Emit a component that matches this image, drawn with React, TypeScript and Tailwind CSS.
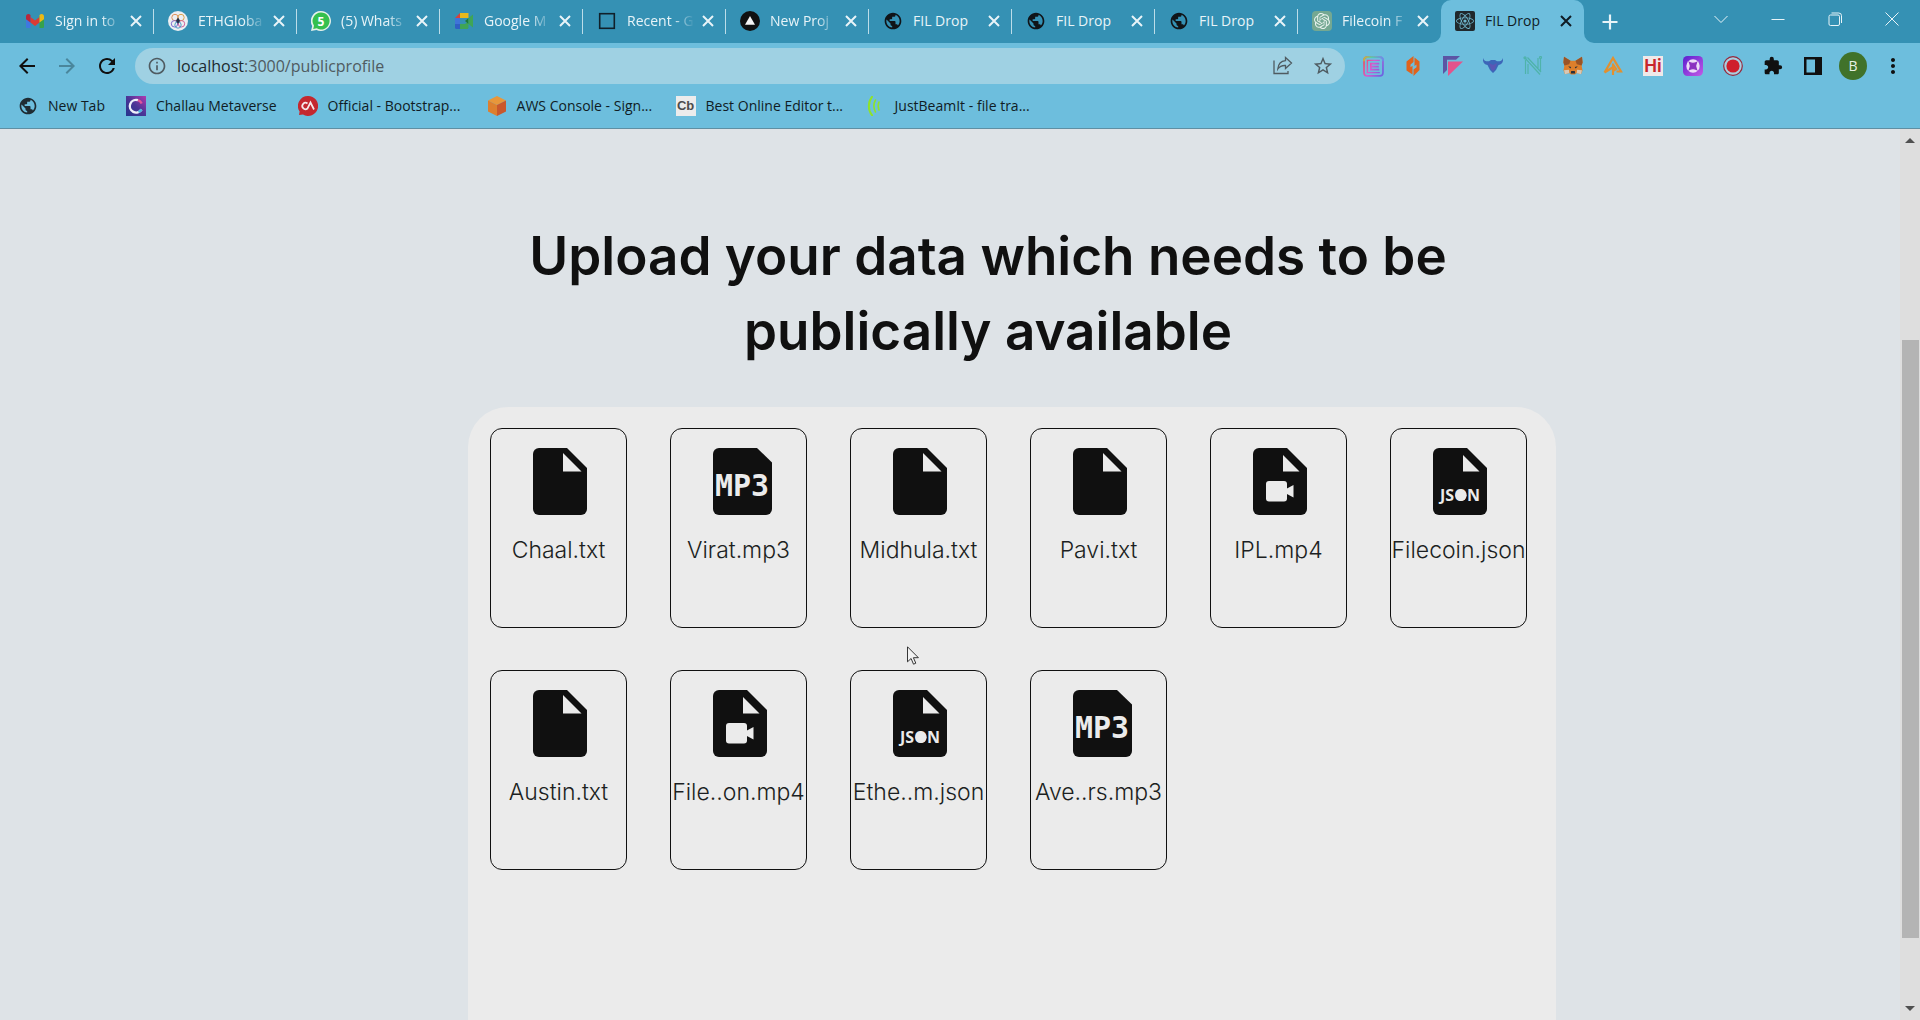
import type { ReactNode } from "react";
import clsx from "clsx";
import { FaReact } from "react-icons/fa";
import { SiOpenai } from "react-icons/si";
import {
  MdArrowBack,
  MdArrowForward,
  MdExtension,
  MdInfoOutline,
  MdMoreVert,
  MdPublic,
  MdRefresh,
  MdStarBorder,
} from "react-icons/md";

type FileKind = "txt" | "mp3" | "mp4" | "json";

const files: { name: string; kind: FileKind }[] = [
  { name: "Chaal.txt", kind: "txt" },
  { name: "Virat.mp3", kind: "mp3" },
  { name: "Midhula.txt", kind: "txt" },
  { name: "Pavi.txt", kind: "txt" },
  { name: "IPL.mp4", kind: "mp4" },
  { name: "Filecoin.json", kind: "json" },
  { name: "Austin.txt", kind: "txt" },
  { name: "File..on.mp4", kind: "mp4" },
  { name: "Ethe..m.json", kind: "json" },
  { name: "Ave..rs.mp3", kind: "mp3" },
];

/* ---------- favicons ---------- */

const Globe = () => <MdPublic className="size-5 shrink-0 text-[#101418]" />;

const Gmail = () => (
  <svg viewBox="0 0 20 20" className="size-5 shrink-0">
    <path d="M1 5h4.500v12H2.500C1.500 17 1 16.500 1 15.500z" fill="#3f78e0" />
    <path d="M19 5h-4.500v12h3c1 0 1.500-.5 1.500-1.500z" fill="#35a24c" />
    <path d="M5.500 6L10 9.500 14.500 6v5.500L10 15l-4.500-3.500z" fill="#dc3b33" />
    <path d="M1 5.500C1 3.200 3.400 2.300 5.500 4v7.500L1 8.200z" fill="#b8283c" />
    <path d="M19 5.500c0-2.300-2.400-3.200-4.500-1.500v7.500L19 8.200z" fill="#ecb916" />
  </svg>
);

const EthGlobal = () => (
  <svg viewBox="0 0 20 20" className="size-5 shrink-0" fill="none">
    <circle cx="10" cy="10" r="10" fill="#eceff2" />
    <circle cx="7" cy="6.500" r="3.200" stroke="#e0915a" />
    <circle cx="13" cy="6.500" r="3.200" stroke="#dba24c" />
    <circle cx="6.500" cy="12.800" r="3.200" stroke="#7f6ad0" />
    <circle cx="13.500" cy="12.800" r="3.200" stroke="#d0639a" />
    <circle cx="10" cy="14" r="3.200" stroke="#4f9fc8" />
    <path d="M10 6.500l2 3.200L10 13 8 9.700z" fill="#22304a" />
  </svg>
);

const WhatsApp = () => (
  <svg viewBox="0 0 20 20" className="size-5 shrink-0">
    <path d="M10 0a10 10 0 1 1-4.600 18.900L0 20l1.200-5A10 10 0 0 1 10 0z" fill="#e6f2ea" />
    <path d="M10 1.500a8.500 8.500 0 1 1-4.300 15.800L2.200 18l.8-3.300A8.500 8.500 0 0 1 10 1.500z" fill="#35c04e" />
    <text x="10" y="14.500" textAnchor="middle" fontSize="12" fontWeight="700" fontFamily="Open Sans, sans-serif" fill="#fff">
      5
    </text>
  </svg>
);

const Meet = () => (
  <svg viewBox="0 0 20 20" className="size-5 shrink-0">
    <path d="M1 7l5-5v5z" fill="#d8423a" />
    <path d="M6 2h8.500v5H6z" fill="#e8b91c" />
    <path d="M1 7h5v6H1z" fill="#3f74d8" />
    <path d="M1 13h5v5H2.500C1.600 18 1 17.400 1 16.500z" fill="#2f5fc4" />
    <path d="M6 13h5l3.500-3v6.500c0 .9-.6 1.500-1.500 1.500H6z" fill="#3fa556" />
    <path d="M11 10l3.500-3v6z" fill="#1d7a38" />
    <path d="M14.500 7L19 3.500v13L14.500 13z" fill="#3fa556" />
  </svg>
);

const Recent = () => (
  <svg viewBox="0 0 20 20" className="size-5 shrink-0">
    <rect x="2.700" y="2.700" width="14.600" height="14.600" fill="none" stroke="#10202a" strokeWidth="1.600" />
  </svg>
);

const Vercel = () => (
  <svg viewBox="0 0 20 20" className="size-5 shrink-0">
    <circle cx="10" cy="10" r="10" fill="#101010" />
    <path d="M10 5l5 8.700H5z" fill="#f4f4f4" />
  </svg>
);

const OpenAi = () => (
  <span className="flex size-5 shrink-0 items-center justify-center rounded-sm bg-[#74a892] text-[#e8f2ee]">
    <SiOpenai className="size-4" />
  </span>
);

const ReactIcon = () => (
  <span className="flex size-5 shrink-0 items-center justify-center rounded-xs bg-[#20282c] text-[#6fb6cc]">
    <FaReact className="size-[18px]" />
  </span>
);

const tabs: { title: string; icon: ReactNode; active?: boolean }[] = [
  { title: "Sign in to", icon: <Gmail /> },
  { title: "ETHGloba", icon: <EthGlobal /> },
  { title: "(5) Whats", icon: <WhatsApp /> },
  { title: "Google M", icon: <Meet /> },
  { title: "Recent - G", icon: <Recent /> },
  { title: "New Proj", icon: <Vercel /> },
  { title: "FIL Drop", icon: <Globe /> },
  { title: "FIL Drop", icon: <Globe /> },
  { title: "FIL Drop", icon: <Globe /> },
  { title: "Filecoin F", icon: <OpenAi /> },
  { title: "FIL Drop", icon: <ReactIcon />, active: true },
];

/* ---------- bookmark icons ---------- */

const Challau = () => (
  <svg viewBox="0 0 20 20" className="size-5">
    <defs>
      <linearGradient id="challau" x1="1" y1="0" x2="0" y2="1">
        <stop offset="0" stopColor="#b03bb0" />
        <stop offset=".5" stopColor="#4a3596" />
        <stop offset="1" stopColor="#26358c" />
      </linearGradient>
    </defs>
    <path d="M0 0h20v20H0z" fill="url(#challau)" />
    <path d="M15.500 13.500A6.300 6.300 0 1 1 12 4.200" fill="none" stroke="#eef0fa" strokeWidth="2.400" />
    <path d="M12 4.200a6.300 6.300 0 0 1 3.700 3.300" fill="none" stroke="#e0559a" strokeWidth="2.400" />
    <path d="M15.500 13.500a6.300 6.300 0 0 1-3 2.500" fill="none" stroke="#4cb4e0" strokeWidth="2.400" />
  </svg>
);

const CodingArtist = () => (
  <svg viewBox="0 0 20 20" className="size-5" fill="none" stroke="#f6eaea" strokeWidth="1.700">
    <path d="M10 0a10 10 0 1 1-5 18.600L1 19l.6-3.500A10 10 0 0 1 10 0z" fill="#c4282f" stroke="none" />
    <path d="M9.500 7.500a3.200 3.200 0 1 0 0 5L12.500 6.500l3.500 7" />
  </svg>
);

const Aws = () => (
  <svg viewBox="0 0 20 20" className="size-5">
    <path d="M10 0l9 4.500-9 4.500-9-4.500z" fill="#e8973a" />
    <path d="M1 4.500L10 9v11l-9-4.500z" fill="#dd7f2e" />
    <path d="M19 4.500L10 9v11l9-4.500z" fill="#c9582c" />
  </svg>
);

const Cb = () => (
  <span className="flex size-5 items-center justify-center bg-[#ececec] font-['Liberation_Sans',sans-serif] text-[13px] font-bold text-[#4c4c4c]">
    Cb
  </span>
);

const JustBeam = () => (
  <svg viewBox="0 0 20 20" className="size-5" fill="none" stroke="#8fe32a" strokeLinecap="round">
    <path d="M7 .8C2.800 6 2.800 14 7 19.200" strokeWidth="2" />
    <path d="M10.500 4c-2.200 4-2.200 8 0 12" strokeWidth="1.600" />
    <path d="M14 6c-1.300 3-1.300 5 0 8" strokeWidth="1.600" />
  </svg>
);

const bookmarks: { title: string; icon: ReactNode }[] = [
  { title: "New Tab", icon: <MdPublic className="size-5 text-[#1f2c33]" /> },
  { title: "Challau Metaverse", icon: <Challau /> },
  { title: "Official - Bootstrap...", icon: <CodingArtist /> },
  { title: "AWS Console - Sign...", icon: <Aws /> },
  { title: "Best Online Editor t...", icon: <Cb /> },
  { title: "JustBeamIt - file tra...", icon: <JustBeam /> },
];

/* ---------- extension icons ---------- */

const extensions: { label: string; icon: ReactNode }[] = [
  {
    label: "Core",
    icon: (
      <svg viewBox="0 0 20 20" className="size-[21px]" fill="none">
        <defs>
          <linearGradient id="core" gradientUnits="userSpaceOnUse" x1="1" y1="6" x2="19" y2="15">
            <stop offset="0" stopColor="#e8506a" />
            <stop offset=".4" stopColor="#d65bd0" />
            <stop offset="1" stopColor="#6f62e0" />
          </linearGradient>
          <linearGradient id="coreTop" gradientUnits="userSpaceOnUse" x1="1" y1="0" x2="19" y2="0">
            <stop offset="0" stopColor="#c8b23e" />
            <stop offset=".4" stopColor="#54cfa8" />
            <stop offset="1" stopColor="#6a8ee8" />
          </linearGradient>
        </defs>
        <rect x="1" y="1" width="18" height="18" rx="3" stroke="url(#core)" strokeWidth="1.600" />
        <path d="M1 5V4a3 3 0 0 1 3-3h12a3 3 0 0 1 3 3v1" stroke="url(#coreTop)" strokeWidth="1.600" />
        <path d="M16 4.200H4.200v11.600H16" stroke="url(#core)" strokeWidth="1.300" />
        <path d="M15.500 7.300H7.500v5.700h8M8 10.200h7" stroke="url(#core)" strokeWidth="1.700" />
      </svg>
    ),
  },
  {
    label: "Sender",
    icon: (
      <svg viewBox="0 0 20 20" className="size-5" fill="#e0631c">
        <path d="M10.500 0v6L7.500 8.500v2.700l2-1.400v8.700L3.500 14.500V5.500z" />
        <path d="M11.500 1.500l5 4v8.500l-6 6v-6.500l3-2.200V8.500l-2 1.500z" />
      </svg>
    ),
  },
  {
    label: "Kanga",
    icon: (
      <svg viewBox="0 0 20 20" className="size-5">
        <path d="M0 0h17l-4 3.800H4V14l-4 4z" fill="#5c55a4" />
        <path d="M5 5.500h15L5 20z" fill="#e2548c" />
      </svg>
    ),
  },
  {
    label: "Taho",
    icon: (
      <svg viewBox="0 0 20 20" className="size-5">
        <path d="M0 2c1 3 3 3.500 6 3.300L8 4h4l2 1.300c3 .2 5-.3 6-3.300.4 4-1 6.500-4.500 7L13 14l-3 3-3-3-2.500-5C1 8.500-.4 6 0 2z" fill="#3c66b8" />
        <path d="M6 7l4 2 4-2-2 6-2 2-2-2z" fill="#5a56b4" />
      </svg>
    ),
  },
  {
    label: "Nami",
    icon: (
      <svg viewBox="0 0 20 20" className="size-5" fill="none" stroke="#4fb3aa" strokeWidth="1.200">
        <path d="M2.500 18V4M5 18V8M15 2v10M17.500 2v14M1.500 1.500L17 18.500M4.500 1.500L18 16" />
        <circle cx="2" cy="1.800" r="1" />
        <circle cx="17.500" cy="1.500" r="1" />
      </svg>
    ),
  },
  {
    label: "MetaMask",
    icon: (
      <svg viewBox="0 0 20 20" className="size-5">
        <path d="M1 .8l6.500 4h5L19 .8l.6 5.700-1 3 .9 5-1.500 3.700-4.200-1.100L12 18.500H8L6.200 17.100 2 18.200.500 14.500l.9-5-1-3z" fill="#dd7f2b" />
        <path d="M1 .8l6.500 4-1.300 3.400L1.400 9.500l-1-3zM19 .8l-6.500 4 1.300 3.400 4.800 1.300 1-3z" fill="#9a5426" />
        <path d="M1 14.200l5-.4.300 3.300L2 18.200zM19 14.200l-5-.4-.3 3.300 4.300 1.100z" fill="#d8c8b6" />
        <path d="M5.200 10.200l3 .7-.8 1.500zM14.800 10.200l-3 .7.800 1.500zM8.200 15h3.600l.4 2.500H7.800z" fill="#28303a" />
      </svg>
    ),
  },
  {
    label: "Authereum",
    icon: (
      <svg viewBox="0 0 20 20" className="size-5" fill="none" stroke="#e2902f" strokeWidth="2.200">
        <path d="M1.500 16.500L10 2l8 13.500h-4.500M1.500 16.500l8-5M10 7.500V19M10 8.500l3 4.500-3 2" />
      </svg>
    ),
  },
  {
    label: "Hi",
    icon: (
      <span className="flex size-5 items-center justify-center bg-[#efe9e9] font-['Roboto',sans-serif] text-lg leading-5 font-semibold text-[#c8262c]">
        Hi
      </span>
    ),
  },
  {
    label: "Orbit",
    icon: (
      <svg viewBox="0 0 20 20" className="size-5">
        <defs>
          <linearGradient id="orbit" x1="0" y1="0" x2="1" y2="1">
            <stop offset="0" stopColor="#5a1fd0" />
            <stop offset="1" stopColor="#c45ae6" />
          </linearGradient>
        </defs>
        <rect width="20" height="20" rx="4.500" fill="url(#orbit)" />
        <circle cx="10" cy="10" r="6.700" fill="#ecdcf8" />
        <path d="M6.500 6.500Q10 8.300 13.500 6.500 11.700 10 13.500 13.500 10 11.700 6.500 13.500 8.300 10 6.500 6.500z" fill="#8a30c0" stroke="#8a30c0" strokeWidth="1.200" />
      </svg>
    ),
  },
  {
    label: "Record",
    icon: (
      <svg viewBox="0 0 20 20" className="size-5">
        <circle cx="10" cy="10" r="9.300" fill="#a9cfe0" stroke="#96283c" strokeWidth="1.200" />
        <circle cx="10" cy="10" r="6.600" fill="#cf1f2c" />
      </svg>
    ),
  },
  { label: "Extensions", icon: <MdExtension className="size-5 text-[#101010]" /> },
  {
    label: "Side panel",
    icon: (
      <svg viewBox="0 0 20 20" className="size-5">
        <path d="M1 1h18v18H1zM3.500 3.500v13H12v-13z" fill="#101010" fillRule="evenodd" />
      </svg>
    ),
  },
];

/* ---------- browser chrome ---------- */

function TabCorner({ side }: { side: "left" | "right" }) {
  return (
    <span className={clsx("absolute bottom-0 size-2.5 bg-[#6dbedd]", side === "left" ? "-left-2.5" : "-right-2.5")}>
      <span className={clsx("block size-full bg-[#3591b4]", side === "left" ? "rounded-br-full" : "rounded-bl-full")} />
    </span>
  );
}

function TabStrip() {
  return (
    <div className="flex h-[43px] bg-[#3591b4] pl-[11px] text-[#e8f4f8]">
      {tabs.map((tab, i) => (
        <div
          key={i}
          className={clsx(
            "relative flex w-[143px] items-center pr-2 pb-0.5 pl-3.5",
            tab.active && "rounded-t-[10px] bg-[#6dbedd] text-[#101c24]"
          )}
        >
          {tab.active && <TabCorner side="left" />}
          {tab.icon}
          <span
            className={clsx(
              "ml-2.5 min-w-0 flex-1 text-sm whitespace-nowrap",
              tab.title !== "FIL Drop" && "mask-r-from-65% mask-r-to-95%"
            )}
          >
            {tab.title}
          </span>
          <button type="button" aria-label="Close tab" className="p-1">
            <svg viewBox="0 0 12 12" className="size-3" stroke="currentColor" strokeWidth="2">
              <path d="M1 1l10 10M11 1L1 11" />
            </svg>
          </button>
          {!tab.active && i < 9 && <span className="absolute top-[9px] right-0 h-[25px] w-px bg-[#bcdde9]" />}
          {tab.active && <TabCorner side="right" />}
        </div>
      ))}
      <button type="button" aria-label="New tab" className="ml-3 flex w-7 items-center justify-center">
        <svg viewBox="0 0 16 16" className="size-4" stroke="currentColor" strokeWidth="2.200">
          <path d="M8 .5v15M.5 8h15" />
        </svg>
      </button>
      <div className="ml-auto flex h-[37px]" aria-label="Window controls">
        <button type="button" aria-label="Search tabs" className="flex w-[57px] items-center justify-center">
          <svg viewBox="0 0 14 14" className="size-3.5" fill="none" stroke="currentColor">
            <path d="M.5 4l6.500 6.500L13.500 4" />
          </svg>
        </button>
        <button type="button" aria-label="Minimize" className="flex w-[57px] items-center justify-center">
          <svg viewBox="0 0 14 14" className="size-3.5" stroke="currentColor">
            <path d="M.5 7.500h13" />
          </svg>
        </button>
        <button type="button" aria-label="Restore" className="flex w-[57px] items-center justify-center">
          <svg viewBox="0 0 14 14" className="size-3.5" fill="none" stroke="currentColor">
            <rect x="1" y="3" width="10.500" height="10.500" rx="1.500" />
            <path d="M3.500 1h7.300A2.700 2.700 0 0 1 13.500 3.700V11" />
          </svg>
        </button>
        <button type="button" aria-label="Close" className="flex w-[57px] items-center justify-center">
          <svg viewBox="0 0 14 14" className="size-3.5" stroke="currentColor">
            <path d="M.5.5l13 13M13.500.5l-13 13" />
          </svg>
        </button>
      </div>
    </div>
  );
}

function Toolbar() {
  return (
    <div className="flex items-center bg-[#6dbedd] px-[7px] pt-[5px] text-[#101010]">
      <button type="button" aria-label="Back" className="flex w-10 justify-center">
        <MdArrowBack className="size-6" />
      </button>
      <button type="button" aria-label="Forward" className="flex w-10 justify-center text-[#4a869c]">
        <MdArrowForward className="size-6" />
      </button>
      <button type="button" aria-label="Reload" className="flex w-10 justify-center">
        <MdRefresh className="size-6" />
      </button>
      <div className="relative mr-2 ml-2 flex h-9 min-w-0 flex-1 items-center rounded-full bg-[#9fd1e3] pr-0.5 pl-3 text-[#4f5b61]">
        <MdInfoOutline className="size-5" />
        <input
          aria-label="Address"
          defaultValue="localhost:3000/publicprofile"
          className="ml-2.5 min-w-0 flex-1 bg-transparent text-base text-transparent outline-none"
        />
        {/* host is darker than the path, so the value is painted over the input */}
        <span className="pointer-events-none absolute left-[42px] text-base" aria-hidden>
          <span className="text-[#1c2a30]">localhost</span>:3000/publicprofile
        </span>
        <button type="button" aria-label="Share" className="flex w-10 justify-center">
          <svg viewBox="0 0 20 20" className="size-5" fill="none" stroke="currentColor" strokeWidth="1.300">
            <path d="M1 4.500V17.500h14V15" />
            <path d="M12.500 1.500l6 5.500-6 5.500V9.500C9 9.300 6.500 10.500 4.800 13 5.200 8.500 8 5 12.500 4.600z" />
          </svg>
        </button>
        <button type="button" aria-label="Bookmark this page" className="flex w-10 justify-center">
          <MdStarBorder className="size-[22px]" />
        </button>
      </div>
      {extensions.map((ext) => (
        <button key={ext.label} type="button" aria-label={ext.label} className="flex w-10 justify-center">
          {ext.icon}
        </button>
      ))}
      <button type="button" aria-label="Profile" className="flex w-10 justify-center">
        <span className="flex size-7 items-center justify-center rounded-full bg-[#40722a] text-sm text-[#e8f0e4]">B</span>
      </button>
      <button type="button" aria-label="Menu" className="flex w-10 justify-center">
        <MdMoreVert className="size-6" />
      </button>
    </div>
  );
}

function BookmarksBar() {
  return (
    <nav className="flex h-[45px] items-center gap-[21px] border-b border-[#5f8fa3] bg-[#6dbedd] px-[18px] text-[#101c24]">
      {bookmarks.map((b) => (
        <a key={b.title} href="#" className="flex items-center gap-2.5 text-sm whitespace-nowrap">
          {b.icon}
          <span className={clsx(b.title.endsWith("...") && "min-w-[138px]")}>{b.title}</span>
        </a>
      ))}
    </nav>
  );
}

/* ---------- page ---------- */

function FileIcon({ kind }: { kind: FileKind }) {
  if (kind === "mp3") {
    return (
      <svg viewBox="0 0 60 67" className="h-[67px] w-[60px]">
        <path d="M6 0h38l15 14.500V61a6 6 0 0 1-6 6H6a6 6 0 0 1-6-6V6a6 6 0 0 1 6-6z" fill="#101010" />
        <text
          x="29"
          y="48"
          textAnchor="middle"
          fontSize="30"
          fontWeight="700"
          fontFamily="DejaVu Sans Mono, monospace"
          fill="#ebebeb"
        >
          MP3
        </text>
      </svg>
    );
  }
  return (
    <svg viewBox="0 0 60 67" className="h-[67px] w-[60px]">
      <path d="M6 0h28l20 20v41a6 6 0 0 1-6 6H6a6 6 0 0 1-6-6V6a6 6 0 0 1 6-6z" fill="#101010" />
      <path d={kind === "txt" ? "M30 5v18.500h18.500z" : "M30 7v16.500h16.500z"} fill="#ebebeb" />
      {kind === "mp4" && (
        <>
          <rect x="13" y="33" width="21" height="20.500" rx="3" fill="#ebebeb" />
          <path d="M33 41l7.500-4v12.500L33 45.500z" fill="#ebebeb" />
        </>
      )}
      {kind === "json" && (
        <>
          <text x="27" y="53" textAnchor="middle" fontSize="16" fontWeight="700" fontFamily="Open Sans, sans-serif" fill="#ebebeb">
            JSON
          </text>
          <circle cx="28" cy="47.300" r="5.600" fill="#ebebeb" />
        </>
      )}
    </svg>
  );
}

function FileCard({ name, kind }: { name: string; kind: FileKind }) {
  return (
    <li className="flex h-[200px] w-[137px] flex-col rounded-xl border border-[#101010] pt-[19px]">
      <div className="ml-[42px]">
        <FileIcon kind={kind} />
      </div>
      <p className="mt-[17px] self-center text-[23px] leading-9 font-light whitespace-nowrap text-[#1c1f22]">{name}</p>
    </li>
  );
}

function Scrollbar() {
  return (
    <div className="flex w-5 flex-col items-center bg-[#dedede] py-2 text-[#505050]" aria-hidden>
      <svg viewBox="0 0 10 6" className="h-1.5 w-2.5" fill="currentColor">
        <path d="M0 6l5-5 5 5z" />
      </svg>
      <div className="my-2 flex w-full flex-1 flex-col items-center">
        <div className="flex-[19]" />
        <div className="w-[17px] flex-[60] bg-[#b4b4b4]" />
        <div className="flex-[6]" />
      </div>
      <svg viewBox="0 0 10 6" className="h-1.5 w-2.5" fill="currentColor">
        <path d="M0 0l5 5 5-5z" />
      </svg>
    </div>
  );
}

function Cursor() {
  return (
    <svg viewBox="0 0 13 19" className="absolute top-[517px] left-[907px] h-[19px] w-[13px]">
      <path d="M.5.8v15l3.600-3.300 2.400 5.700 2.300-1-2.400-5.500h5z" fill="#f2f2f2" stroke="#202020" strokeWidth=".9" />
    </svg>
  );
}

export default function App() {
  return (
    <div className="flex h-screen flex-col overflow-hidden font-['Open_Sans',sans-serif]">
      <header>
        <TabStrip />
        <Toolbar />
        <BookmarksBar />
      </header>
      <div className="relative flex min-h-0 flex-1 bg-[#dee3e7]">
        <main className="flex min-w-0 flex-1 flex-col overflow-hidden pt-[90px] font-['Inter',sans-serif] text-[#101010]">
          <div className="pl-[76px]">
            <h1 className="mx-auto max-w-[960px] text-center text-[53px] leading-[75px] font-semibold">
              Upload your data which needs to be publically available
            </h1>
          </div>
          <div className="mt-[38px] flex flex-1 flex-col pl-[124px]">
            <ul className="mx-auto flex w-full max-w-[1088px] flex-1 flex-wrap content-start gap-x-[43px] gap-y-[42px] rounded-t-[40px] bg-[#ebebeb] pt-[21px] pl-[22px]">
              {files.map((f) => (
                <FileCard key={f.name} name={f.name} kind={f.kind} />
              ))}
            </ul>
          </div>
        </main>
        <Scrollbar />
        <Cursor />
      </div>
    </div>
  );
}
